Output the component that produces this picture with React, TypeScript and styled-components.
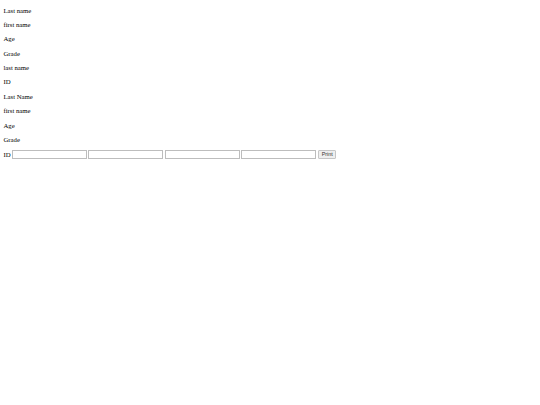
import styled, { createGlobalStyle } from 'styled-components'

const GlobalStyle = createGlobalStyle`
  html, body {
    margin: 0;
    padding: 0;
    background: #ffffff;
  }
`

const Page = styled.main`
  padding: 0 3.4px;
  font-family: 'Liberation Serif', 'Times New Roman', serif;
  font-size: 6.75px;
  color: #000000;
  overflow: hidden;
`

const Label = styled.p`
  margin: 6.75px 0;
  line-height: 7.6px;
`

const FieldRow = styled.div`
  display: flex;
  align-items: center;
  gap: 1.4px;
  margin: 6.75px 0;
  line-height: 7.6px;
`

const RowLabel = styled.span`
  margin-right: 0.2px;
`

const TextField = styled.input`
  box-sizing: border-box;
  width: 75px;
  height: 8.6px;
  padding: 0;
  margin: 0;
  border: 1px solid #bdbdbd;
  background: #ffffff;
  font-size: 5.6px;
`

const PrintButton = styled.button`
  box-sizing: border-box;
  height: 8.4px;
  padding: 0 2.4px;
  margin: 0 0 0 0.6px;
  border: 1px solid #c6c6c6;
  border-radius: 1px;
  background: #efefef;
  color: #333333;
  font-family: 'Liberation Sans', Arial, sans-serif;
  font-size: 5.4px;
  line-height: 1;
`

const labels = [
  'Last name',
  'first name',
  'Age',
  'Grade',
  'last name',
  'ID',
  'Last Name',
  'first name',
  'Age',
  'Grade',
]

export default function App() {
  return (
    <>
      <GlobalStyle />
      <Page>
        {labels.map((text, i) => (
          <Label key={i}>{text}</Label>
        ))}
        <FieldRow>
          <RowLabel>ID</RowLabel>
          <TextField type="text" />
          <TextField type="text" />
          <TextField type="text" />
          <TextField type="text" />
          <PrintButton type="button">Print</PrintButton>
        </FieldRow>
      </Page>
    </>
  )
}
